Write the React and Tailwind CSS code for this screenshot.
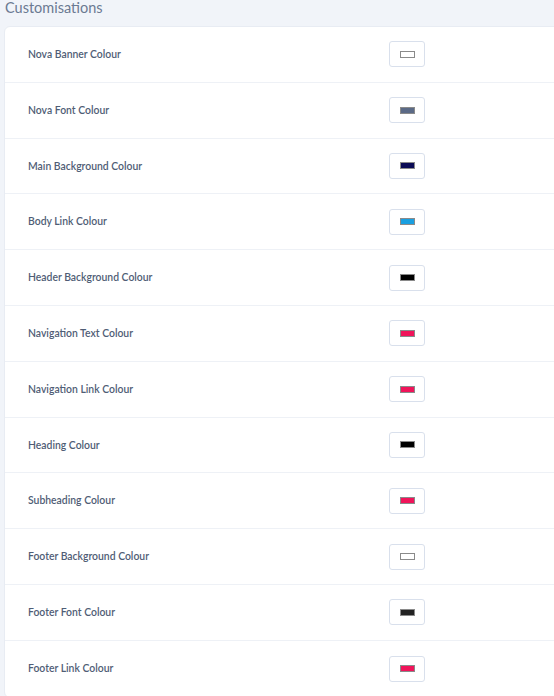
import React from 'react';

const settings = [
  { label: 'Nova Banner Colour', colour: '#ffffff' },
  { label: 'Nova Font Colour', colour: '#5b6a86' },
  { label: 'Main Background Colour', colour: '#0b0b55' },
  { label: 'Body Link Colour', colour: '#1a9fe0' },
  { label: 'Header Background Colour', colour: '#000000' },
  { label: 'Navigation Text Colour', colour: '#f0145a' },
  { label: 'Navigation Link Colour', colour: '#f0145a' },
  { label: 'Heading Colour', colour: '#000000' },
  { label: 'Subheading Colour', colour: '#f0145a' },
  { label: 'Footer Background Colour', colour: '#ffffff' },
  { label: 'Footer Font Colour', colour: '#222222' },
  { label: 'Footer Link Colour', colour: '#f0145a' },
];

const ColourRow = ({ label, colour, last }) => (
  <div
    className={`flex items-center h-[55.8px] ${last ? '' : 'border-b border-[#eef1f6]'}`}
  >
    <span className="w-[384px] pl-[23px] pt-[1px] text-[10.4px] font-semibold text-[#4f5d75]">
      {label}
    </span>
    <button
      type="button"
      className="w-[36px] h-[26px] flex items-center justify-center bg-white border border-[#d9e0ec] rounded-[3px]"
    >
      <span
        className="block w-[15px] h-[7px] border border-[#8a8a8a]"
        style={{ backgroundColor: colour }}
      />
    </button>
  </div>
);

const App = () => {
  return (
    <div
      className="w-[554px] h-[696px] overflow-hidden bg-[#f1f4f9]"
      style={{ fontFamily: 'Lato, "Open Sans", sans-serif' }}
    >
      <h2 className="pl-[5px] -mt-[3px] h-[29px] text-[14.5px] leading-[22px] text-[#6b7a92]">
        Customisations
      </h2>
      <div className="ml-[4px] -mr-[10px] bg-white rounded-[6px] border border-[#e8ecf3]">
        {settings.map((s, i) => (
          <ColourRow
            key={s.label}
            label={s.label}
            colour={s.colour}
            last={i === settings.length - 1}
          />
        ))}
      </div>
    </div>
  );
};

export default App;
